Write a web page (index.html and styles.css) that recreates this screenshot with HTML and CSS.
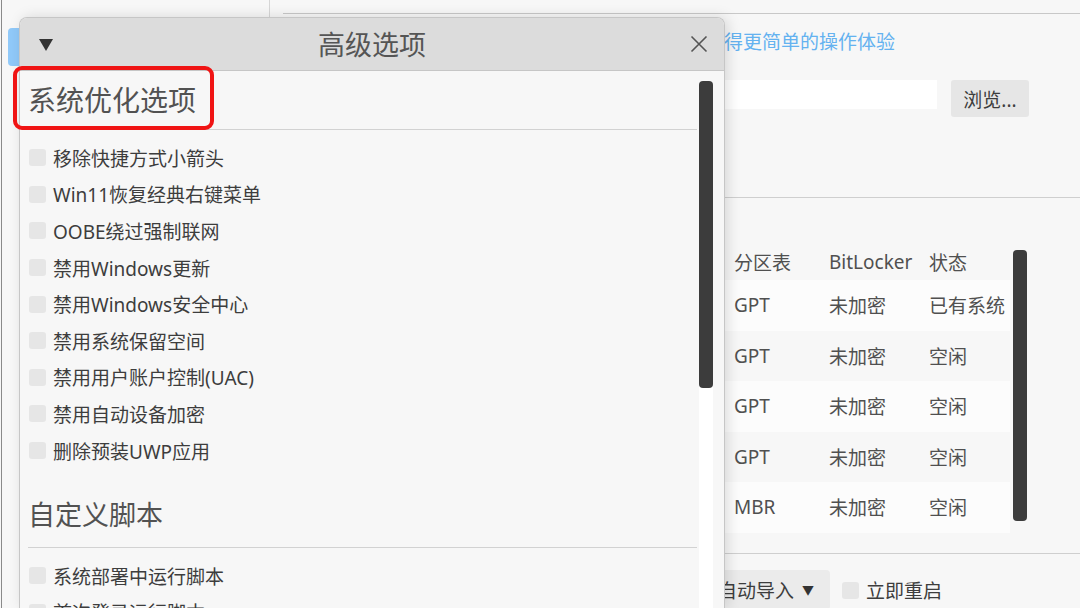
FILE: index.html
```html
<!DOCTYPE html>
<html lang="zh-CN">
<head>
<meta charset="utf-8">
<title>高级选项</title>
<link rel="stylesheet" href="styles.css">
</head>
<body>
<div class="window">
  <aside class="sidebar">
    <div class="nav-item active"></div>
    <div class="nav-item"></div>
  </aside>
  <main class="main">
    <div class="topbar"></div>
    <section class="sec sec-image">
      <div class="label"></div>
      <div class="col">
        <p class="desc"><a class="link" href="#">得更简单的操作体验</a></p>
        <div class="file-row">
          <div class="input"></div>
          <button class="btn">浏览...</button>
        </div>
      </div>
    </section>
    <section class="sec sec-disk">
      <div class="label"></div>
      <div class="table-wrap">
        <div class="table">
          <div class="tr th"><span class="c1">分区表</span><span class="c2">BitLocker</span><span class="c3">状态</span></div>
          <div class="tr odd"><span class="c1">GPT</span><span class="c2">未加密</span><span class="c3">已有系统</span></div>
          <div class="tr"><span class="c1">GPT</span><span class="c2">未加密</span><span class="c3">空闲</span></div>
          <div class="tr odd"><span class="c1">GPT</span><span class="c2">未加密</span><span class="c3">空闲</span></div>
          <div class="tr"><span class="c1">GPT</span><span class="c2">未加密</span><span class="c3">空闲</span></div>
          <div class="tr odd"><span class="c1">MBR</span><span class="c2">未加密</span><span class="c3">空闲</span></div>
        </div>
        <div class="tscroll"></div>
      </div>
    </section>
    <section class="sec sec-actions">
      <div class="label"></div>
      <div class="actions">
        <button class="dropdown">自动导入<span class="caret">▼</span></button>
        <label class="chk"><span class="box"></span><span>立即重启</span></label>
      </div>
    </section>
  </main>
</div>

<div class="dialog">
  <div class="titlebar">
    <span class="tb-left">
      <svg width="14" height="12" viewBox="0 0 14 12"><polygon points="0,0 14,0 7,12" fill="#333"/></svg>
    </span>
    <span class="tb-title">高级选项</span>
    <span class="tb-right">
      <svg width="18" height="18" viewBox="0 0 18 18"><path d="M1.5 1.5 L16.5 16.5 M16.5 1.5 L1.5 16.5" stroke="#555" stroke-width="1.6" fill="none"/></svg>
    </span>
  </div>
  <div class="dbody">
    <div class="dcontent">
      <h2 class="group-title">系统优化选项</h2>
      <ul class="opts">
        <li><span class="box"></span>移除快捷方式小箭头</li>
        <li><span class="box"></span>Win11恢复经典右键菜单</li>
        <li><span class="box"></span>OOBE绕过强制联网</li>
        <li><span class="box"></span>禁用Windows更新</li>
        <li><span class="box"></span>禁用Windows安全中心</li>
        <li><span class="box"></span>禁用系统保留空间</li>
        <li><span class="box"></span>禁用用户账户控制(UAC)</li>
        <li><span class="box"></span>禁用自动设备加密</li>
        <li><span class="box"></span>删除预装UWP应用</li>
      </ul>
      <h2 class="group-title second">自定义脚本</h2>
      <ul class="opts">
        <li><span class="box"></span>系统部署中运行脚本</li>
        <li><span class="box"></span>首次登录运行脚本</li>
      </ul>
    </div>
    <div class="dscroll"><div class="track"><div class="thumb"></div></div></div>
  </div>
</div>

<div class="annot"></div>
</body>
</html>
```

FILE: styles.css
```css
* { box-sizing: border-box; }
html, body {
  margin: 0;
  padding: 0;
  width: 1080px;
  height: 608px;
  overflow: hidden;
  background: #f7f7f7;
  font-family: "Noto Sans", "Noto Sans CJK SC", sans-serif;
  color: #444;
}
body { padding-left: 1px; position: relative; }

.window {
  display: grid;
  grid-template-columns: 268px 1fr;
  height: 608px;
  border-left: 1px solid #8a8a8a;
}

.sidebar {
  border-right: 1px solid #d6d6d6;
  padding: 28px 0 0 6px;
}
.nav-item {
  height: 38px;
  width: 240px;
  border-radius: 4px;
  margin-bottom: 6px;
}
.nav-item.active { background: #90c9f9; }

.main {
  padding-left: 13px;
  display: flex;
  flex-direction: column;
}
.topbar {
  height: 14px;
  border-bottom: 1px solid #c8c8c8;
  flex: none;
}

.sec {
  display: grid;
  grid-template-columns: 441px 1fr;
  border-bottom: 1px solid #cfcfcf;
  flex: none;
}

.sec-image { height: 184px; }
.sec-image .col { padding-top: 14px; }
.desc {
  margin: 0;
  height: 28px;
  line-height: 28px;
  font-size: 19px;
}
.link { color: #64b2f0; text-decoration: none; }
.file-row {
  display: flex;
  align-items: flex-start;
  gap: 14px;
  margin-top: 24px;
}
.input {
  width: 213px;
  height: 29px;
  background: #ffffff;
}
.btn {
  width: 78px;
  height: 37px;
  border: none;
  border-radius: 3px;
  background: #e6e6e6;
  font: inherit;
  font-size: 19px;
  color: #3d3d3d;
  padding: 0;
}

.sec-disk { height: 356px; }
.table-wrap {
  display: flex;
  align-items: flex-start;
  padding-top: 46px;
}
.table { width: 286px; }
.tr {
  display: flex;
  height: 50.5px;
  align-items: center;
  padding-left: 10px;
  font-size: 19px;
  color: #505050;
}
.tr.th { height: 36px; }
.tr.odd { background: #fcfcfc; }
.c1 { width: 95px; }
.c2 { width: 100px; }
.c3 { flex: 1; white-space: nowrap; }
.tscroll {
  width: 14px;
  height: 271px;
  margin: 6px 0 0 3px;
  border-radius: 4px;
  background: #3c3c3c;
}

.sec-actions { border-bottom: none; grid-template-columns: 423px 1fr; }
.actions {
  display: flex;
  align-items: center;
  padding-top: 16px;
}
.dropdown {
  height: 40px;
  border: none;
  border-radius: 4px;
  background: #ebebeb;
  font: inherit;
  font-size: 19px;
  color: #3d3d3d;
  padding: 0 16px 0 12px;
  display: flex;
  align-items: center;
}
.caret { font-size: 12px; color: #333; margin-left: 8px; }
.chk {
  display: flex;
  align-items: center;
  gap: 7px;
  margin-left: 12px;
  font-size: 19px;
  color: #3d3d3d;
}

.box {
  display: inline-block;
  width: 17px;
  height: 17px;
  border-radius: 3px;
  background: #e6e6e6;
  flex: none;
}

/* dialog */
.dialog {
  position: absolute;
  left: 19px;
  top: 17px;
  width: 706px;
  height: 591px;
  background: #f7f7f7;
  border: 1px solid #c6c6c6;
  border-bottom: none;
  border-radius: 8px 8px 0 0;
  box-shadow: 3px 0 14px rgba(0,0,0,0.13);
  display: flex;
  flex-direction: column;
  overflow: hidden;
}
.titlebar {
  height: 53px;
  flex: none;
  background: #dcdcdc;
  border-bottom: 1px solid #c6c6c6;
  display: grid;
  grid-template-columns: 1fr auto 1fr;
  align-items: center;
}
.tb-left { padding-left: 19px; display: flex; align-items: center; padding-top: 1px; }
.tb-title {
  font-size: 27px;
  color: #555;
  line-height: 1;
}
.tb-right { justify-self: end; padding-right: 16px; display: flex; }

.dbody {
  flex: 1;
  display: flex;
  min-height: 0;
}
.dcontent {
  flex: 1;
  padding-left: 8px;
  overflow: hidden;
}
.group-title {
  margin: 0;
  font-weight: normal;
  font-size: 28px;
  line-height: 40px;
  color: #525252;
  padding: 9px 0 9px 0;
  border-bottom: 1px solid #d2d2d2;
}
.group-title.second { font-size: 27px; padding-top: 26px; padding-bottom: 12px; }
.opts {
  list-style: none;
  margin: 0;
  padding: 9.5px 0 0 1px;
}
.opts li {
  height: 36.6px;
  display: flex;
  align-items: center;
  gap: 7px;
  font-size: 19px;
  color: #3d3d3d;
  white-space: nowrap;
}
.dscroll {
  width: 27px;
  flex: none;
  padding: 10px 11px 0 2px;
}
.track {
  height: 100%;
  background: #ffffff;
  border-radius: 4px 4px 0 0;
}
.thumb {
  height: 307px;
  border-radius: 4px;
  background: #3c3c3c;
}

.annot {
  position: absolute;
  left: 13px;
  top: 66px;
  width: 201px;
  height: 64px;
  border: 4px solid #f01414;
  border-radius: 9px;
}
```
